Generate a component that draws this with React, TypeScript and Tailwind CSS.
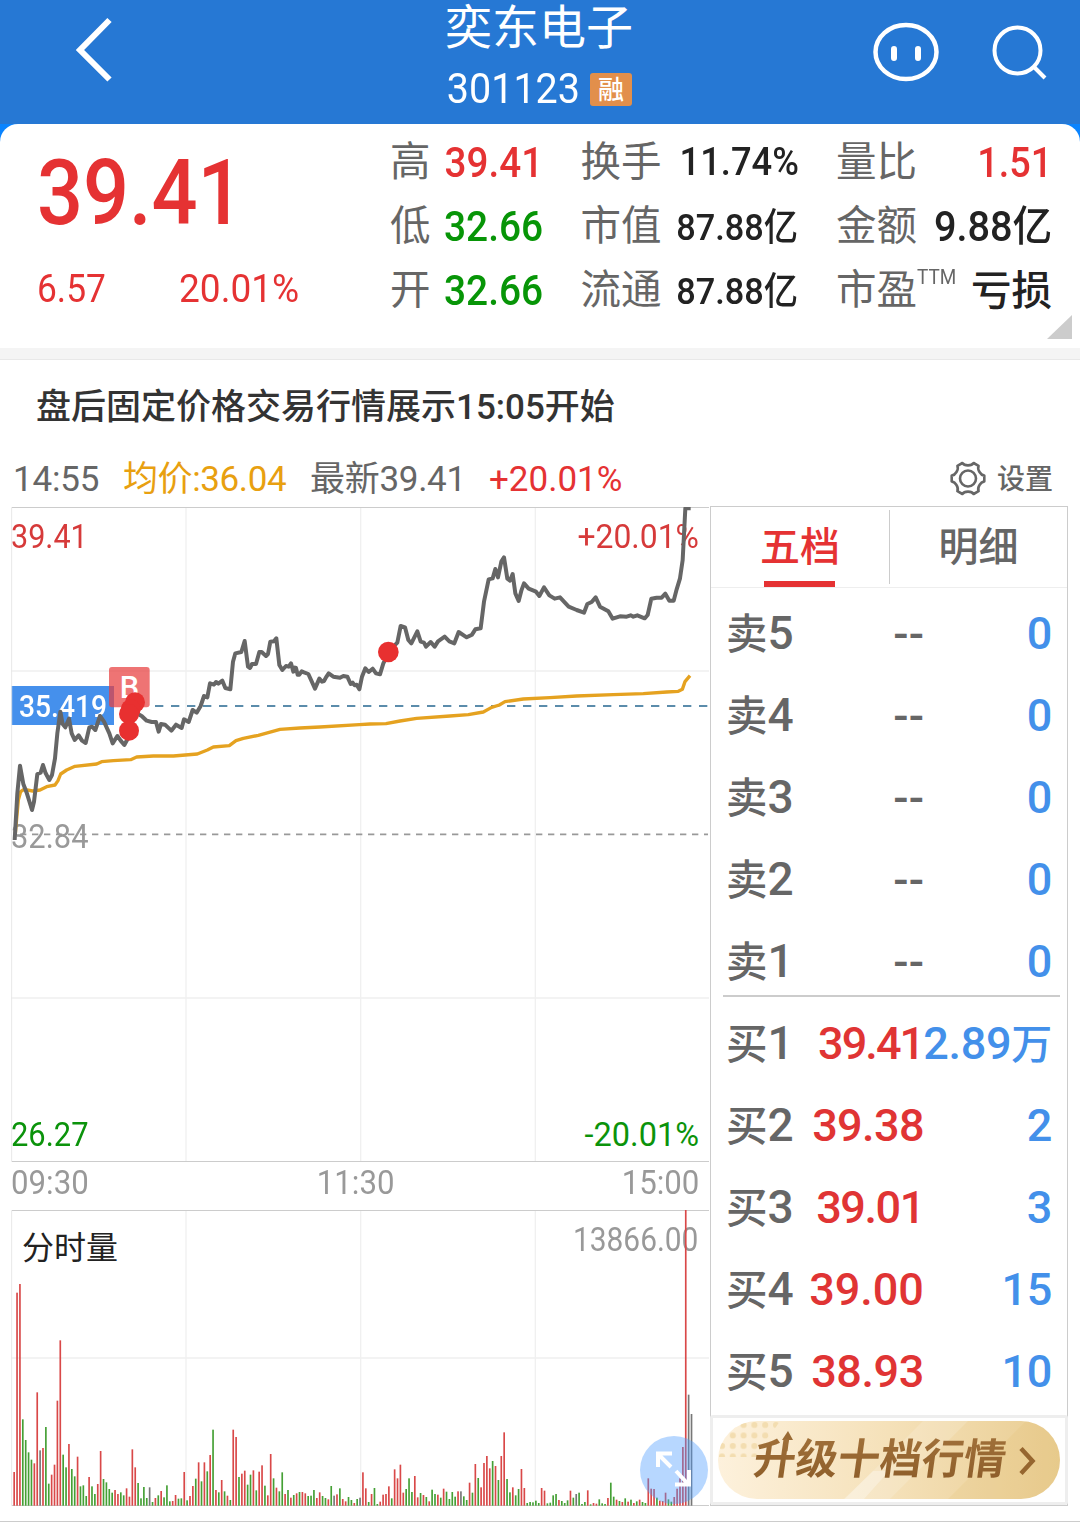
import { type ReactNode } from "react";
import clsx from "clsx";

type Stat = {
  label: string;
  sup?: string;
  value: string;
  className: string;
};

type Level = { label: string; price: string; volume: string; tight?: string };

const stats: Stat[][] = [
  [
    { label: "高", value: "39.41", className: "scale-x-[0.92] text-[42px] text-[#e53233]" },
    { label: "换手", value: "11.74%", className: "scale-x-[0.955] text-[38px] text-[#222]" },
    { label: "量比", value: "1.51", className: "scale-x-[0.9] text-[42px] text-[#e53233]" },
  ],
  [
    { label: "低", value: "32.66", className: "scale-x-[0.925] text-[42px] text-[#079507]" },
    { label: "市值", value: "87.88亿", className: "scale-x-[0.915] pt-[2px] text-[37.5px] text-[#222]" },
    { label: "金额", value: "9.88亿", className: "scale-x-[0.945] text-[42px] text-[#222]" },
  ],
  [
    { label: "开", value: "32.66", className: "scale-x-[0.925] text-[42px] text-[#079507]" },
    { label: "流通", value: "87.88亿", className: "scale-x-[0.915] pt-[2px] text-[37.5px] text-[#222]" },
    { label: "市盈", sup: "TTM", value: "亏损", className: "mt-[3px] text-[40.5px] text-[#222]" },
  ],
];

const asks: Level[] = [
  { label: "卖5", price: "--", volume: "0" },
  { label: "卖4", price: "--", volume: "0" },
  { label: "卖3", price: "--", volume: "0" },
  { label: "卖2", price: "--", volume: "0" },
  { label: "卖1", price: "--", volume: "0" },
];

const bids: Level[] = [
  { label: "买1", price: "39.41", volume: "2.89万", tight: "tracking-[-1.9px]" },
  { label: "买2", price: "39.38", volume: "2", tight: "tracking-[-0.6px]" },
  { label: "买3", price: "39.01", volume: "3", tight: "tracking-[-1.4px]" },
  { label: "买4", price: "39.00", volume: "15", tight: "tracking-[0px]" },
  { label: "买5", price: "38.93", volume: "10", tight: "tracking-[-0.4px]" },
];

// Chart data is kept at three units per css pixel.
const PRICE_LINE =
  "44,1020 52,880 60,797 70,852 80,878 96,930 102,905 112,822 122,818 129,795 137,820 148,840 156,825 165,775 172,700 181,635 188,672 196,682 207,656 215,700 224,720 236,706 246,722 257,729 268,682 276,680 286,690 300,648 312,665 328,700 338,730 352,708 362,722 373,735 384,715 395,670 410,640 425,648 440,662 455,666 468,666 476,695 483,672 495,674 514,692 528,674 545,684 552,658 566,666 578,630 590,638 602,618 612,588 622,592 630,550 642,554 648,546 655,551 667,542 676,564 691,568 699,485 706,460 724,456 734,423 744,500 750,504 756,492 768,492 778,456 785,456 798,468 804,462 811,425 822,424 829,415 838,495 847,510 858,498 866,500 873,490 880,515 885,503 888,504 893,524 898,524 905,514 912,517 925,522 945,566 958,536 966,545 972,543 978,532 986,520 1000,530 1020,533 1030,528 1042,530 1052,552 1058,548 1064,556 1070,554 1078,568 1086,530 1096,505 1106,516 1118,506 1128,520 1140,523 1150,490 1165,460 1180,440 1192,428 1202,378 1215,382 1225,420 1234,430 1252,394 1262,425 1272,428 1278,440 1292,426 1304,440 1314,424 1334,410 1348,424 1363,430 1376,396 1400,412 1416,404 1426,388 1442,385 1452,305 1466,238 1478,235 1486,207 1494,232 1504,185 1512,172 1522,236 1530,242 1538,222 1546,280 1556,303 1564,272 1572,250 1586,266 1608,275 1618,288 1632,262 1648,286 1664,296 1680,292 1706,320 1730,330 1752,338 1762,312 1775,306 1787,292 1800,320 1825,334 1838,356 1860,349 1880,350 1892,346 1900,350 1912,346 1934,355 1943,345 1954,296 1970,293 1985,293 1996,281 2008,302 2021,302 2030,268 2040,235 2048,180 2056,25 2072,25";

const AVG_LINE =
  "46,1000 55,900 62,875 72,868 98,873 120,870 140,860 165,855 174,842 182,822 200,810 225,799 290,792 305,785 340,782 392,779 410,771 460,768 520,768 592,762 622,750 640,741 688,737 708,722 730,715 775,706 840,688 900,684 960,681 1078,674 1110,672 1158,671 1200,663 1250,655 1350,648 1405,644 1450,636 1475,622 1498,615 1515,605 1570,597 1650,593 1730,588 1840,584 1930,581 2000,576 2035,574 2047,568 2055,545 2070,527";

// One entry a minute: height of the bar, then r(ise), g(reen fall) or k (flat).
const VOLUME =
  "101r 639r 665r 259g 197g 160g 138g 127r 340r 166k 173r 236g 66g 93r 123r 315r 496r 153g 115g 185r 110g 88g 147r 58g 61g 29g 86r 58g 35g 65r 164r 80g 70g 50g 39g 47r 35r 40g 31g 52r 27r 169r 115r 68g 22g 56g 23g 55k 11g 23r 31g 44r 25g 61g 13g 14r 32r 21g 22g 101r 16g 29r 59r 81g 130r 73g 130r 103g 152r 228g 47r 40g 77r 43g 30r 17g 228r 206r 86g 96r 105r 63g 93g 106r 46g 102r 121r 60g 31r 155r 82g 54r 43g 100g 35r 47g 24r 32g 37r 41g 41r 37r 29g 30g 47g 23r 40r 29g 23g 19r 59g 30k 34r 52g 20r 13r 26g 17g 8r 20g 24k 100r 52r 11g 35r 53g 5g 12r 33r 35r 58r 22g 109r 82r 123r 39r 50g 82g 41g 89r 25r 38g 32r 26g 13r 48g 35g 33r 24g 51r 42g 20g 41g 27g 43r 43k 28g 17g 69r 39g 125r 83g 55r 128r 149r 112r 134g 119r 77g 149r 220r 80g 40g 55r 31g 50g 110r 53r 8g 11g 10g 15g 8g 53r 45r 7g 9g 31g 35g 17r 14g 8g 16g 45r 24g 35k 39g 5g 11g 46r 4g 8r 6r 19g 7g 5g 23r 69g 27g 18r 14g 11r 22g 12r 18g 8r 13g 18r 11g 8g 82r 51r 50r 24g 15r 14r 39r 19g 12g 26r 51r 82r 176r 887r 333k 275k";

const bars = VOLUME.split(" ").map((entry, i) => ({
  x: 40 + i * 8.647,
  height: parseInt(entry, 10),
  kind: entry.slice(-1),
}));

const barFill: Record<string, string> = {
  r: "fill-[#d94848]",
  g: "fill-[#45a035]",
  k: "fill-[#777]",
};

function Header() {
  return (
    <header className="grid h-[124px] grid-cols-[1fr_192px_1fr] bg-[#2678d4] text-white">
      <button aria-label="返回" className="mt-[14px] ml-[72px] h-[72px] w-[44px]">
        <svg viewBox="0 0 44 72" fill="none" stroke="currentColor" strokeWidth="6">
          <path d="M37.5 6 8 36l29.5 29.5" />
        </svg>
      </button>
      <div className="flex flex-col">
        <h1 className="h-[62px] pl-[1px] text-[47px] leading-[55px] whitespace-nowrap">奕东电子</h1>
        <div className="flex h-[54px] items-center">
          <span className="w-[146px] origin-left scale-x-[0.94] pl-[3px] text-[42px] leading-[56px]">301123</span>
          <span className="h-[33px] w-[42px] rounded-[3px] bg-[#e28f4b] text-center text-[26px] leading-[34px] font-medium">
            融
          </span>
        </div>
      </div>
      <div className="mr-[28px] flex items-start justify-end gap-[48px] pt-[18px]">
        <svg className="h-[68px] w-[72px]" viewBox="0 0 72 68" fill="none" stroke="currentColor">
          <ellipse cx="36" cy="34" rx="30.5" ry="27" strokeWidth="4.5" />
          <path d="M24 31v9M48 31v9" strokeWidth="6" strokeLinecap="round" />
        </svg>
        <svg className="mt-[4px] h-[62px] w-[62px]" viewBox="0 0 62 62" fill="none" stroke="currentColor" strokeWidth="4">
          <circle cx="27.5" cy="28.5" r="23" />
          <path d="m44 45 11 11" />
        </svg>
      </div>
    </header>
  );
}

function Quote() {
  return (
    <section className="bg-[#0a84ff]">
      <div className="relative flex h-[224px] rounded-t-[18px] bg-white">
        <div className="w-[390px] pt-[21px] pl-[37px] text-[#e53233]">
          <div className="origin-left scale-x-[0.9] text-[90px] leading-[98px] font-medium">39.41</div>
          <div className="mt-[22px] flex text-[38px] leading-[48px]">
            <span className="w-[142px] origin-left scale-x-[0.93]">6.57</span>
            <span className="origin-left scale-x-[0.975]">20.01%</span>
          </div>
        </div>
        <div className="grid h-[192px] grid-cols-[153px_218px_216px] gap-x-[37.500px] pt-[6px]">
          {stats.flat().map((s) => (
            <div key={s.label} className="flex h-[64px] items-center justify-between whitespace-nowrap">
              <span className="flex text-[40.5px] leading-[69px] text-[#666]">
                {s.label}
                {s.sup && (
                  <sup className="top-0 w-0 origin-left scale-x-[0.9] text-[21px] leading-[42px]">{s.sup}</sup>
                )}
              </span>
              <span className={clsx("origin-right leading-[65px] font-medium", s.className)}>{s.value}</span>
            </div>
          ))}
        </div>
        <svg className="absolute right-[8px] bottom-[9px] h-[24px] w-[25px]" viewBox="0 0 25 24">
          <path d="M25 0v24H0z" className="fill-[#ccc]" />
        </svg>
      </div>
    </section>
  );
}

function InfoRow() {
  return (
    <div className="flex h-[53px] items-center justify-between pr-[27px] pl-[13px] text-[35px] whitespace-nowrap text-[#666]">
      <div className="flex items-center leading-[56px]">
        <span className="w-[110px] tracking-[-0.2px]">14:55</span>
        <span className="w-[187px] tracking-[-0.4px] text-[#e8a010]">均价:36.04</span>
        <span className="w-[179px] tracking-[-0.3px]">最新39.41</span>
        <span className="text-[#e53233]">+20.01%</span>
      </div>
      <button className="flex items-center gap-[11px] text-[28px] leading-[56px] font-medium">
        <svg className="-mt-[2px] h-[36px] w-[36px]" viewBox="0 0 36 36" fill="none" stroke="currentColor" strokeWidth="2.6">
          <path
            d="M12.4 2 Q13.800 4.400 18 4.400 Q22.200 4.400 23.600 2 L28.600 4.800 Q27.400 7.500 29.500 11 Q31.200 14 34.300 14.600 V20.400 Q31.200 21 29.500 24 Q27.400 27.500 28.600 30.200 L23.600 33 Q22.200 30.600 18 30.600 Q13.800 30.600 12.400 33 L7.400 30.200 Q8.600 27.500 6.500 24 Q4.800 21 1.700 20.400 V14.600 Q4.800 14 6.500 11 Q8.600 7.500 7.400 4.800 Z"
            strokeLinejoin="round"
          />
          <circle cx="18" cy="17.5" r="8" />
        </svg>
        设置
      </button>
    </div>
  );
}

function ChartLabel({ className, children }: { className: string; children: ReactNode }) {
  return <span className={clsx("absolute text-[32.5px] leading-[36px]", className)}>{children}</span>;
}

function PriceChart() {
  return (
    <div className="relative h-[655px]">
      <ChartLabel className="top-[12px] left-0 origin-left scale-x-[0.94] text-[#d63a3a]">39.41</ChartLabel>
      <ChartLabel className="top-[12px] right-[11px] origin-right scale-x-[0.98] text-[#d63a3a]">+20.01%</ChartLabel>
      <ChartLabel className="top-[312px] left-0 origin-left scale-x-[0.95] text-[#999]">32.84</ChartLabel>
      <ChartLabel className="top-[610px] left-0 origin-left scale-x-[0.95] text-[#0b930b]">26.27</ChartLabel>
      <ChartLabel className="top-[610px] right-[11px] text-[#0b930b]">-20.01%</ChartLabel>
      <div className="absolute top-[179px] left-0 h-[39px] w-[103px] bg-[#4590ec] pl-[8px] text-[31px] leading-[42px] font-medium text-white">
        <span className="block origin-left scale-x-[0.91]">35.419</span>
      </div>
      <svg className="relative h-[655px] w-[698px]" viewBox="33 21 2094 1965" fill="none">
        <path d="M558 24V1983M1082 24V1983M1606 24V1983M33 513H2127M33 1494H2127" className="stroke-[#f0f0f0]" strokeWidth="4" />
        <path d="M35 24V1983" className="stroke-[#e8e8e8]" strokeWidth="3" />
        <path d="M35 22.5H2127M35 1984.5H2127" className="stroke-[#ccc]" strokeWidth="3" />
        <path d="M465 618H2124" className="stroke-[#5b8cab]" strokeWidth="6" strokeDasharray="25 23" />
        <path d="M60 1003H2124" className="stroke-[#999]" strokeWidth="5" strokeDasharray="19 17" />
        <polyline points={AVG_LINE} className="stroke-[#e5a220]" strokeWidth="10" strokeLinejoin="round" />
        <polyline points={PRICE_LINE} className="stroke-[#666]" strokeWidth="12" strokeLinejoin="round" />
        <rect x="327" y="501" width="122" height="121" rx="9" fillOpacity="0.72" className="fill-[#e83e3e]" />
        <text x="388" y="594" fontSize="92" textAnchor="middle" className="fill-white font-medium">
          B
        </text>
        <g className="fill-[#e83030]">
          <circle cx="405" cy="607" r="30" />
          <circle cx="392" cy="628" r="30" />
          <circle cx="387" cy="642" r="30" />
          <circle cx="387" cy="692" r="30" />
          <circle cx="1165" cy="456" r="31" />
        </g>
      </svg>
    </div>
  );
}

function VolumeChart() {
  return (
    <div className="relative h-[296px]">
      <span className="absolute top-[20px] left-[11px] text-[32px] leading-[36px] text-[#222]">分时量</span>
      <ChartLabel className="top-[12px] right-[12px] origin-right scale-x-[0.92] text-[#999]">13866.00</ChartLabel>
      <svg className="relative h-[296px] w-[698px]" viewBox="33 270 2094 888">
        <path d="M558 273V1155M1082 273V1155M1606 273V1155M33 714H2127" className="stroke-[#f0f0f0]" strokeWidth="4" />
        <path d="M35 273V1155" className="stroke-[#e8e8e8]" strokeWidth="3" />
        <path d="M35 271.5H2127M35 1156.5H2127" className="stroke-[#ccc]" strokeWidth="3" />
        {bars.map((b, i) => (
          <rect key={i} x={b.x} y={1157 - b.height} width="5" height={b.height} className={barFill[b.kind]} />
        ))}
      </svg>
      <button aria-label="全屏" className="absolute right-[2px] bottom-[2px] h-[68px] w-[68px] rounded-full bg-[#4a9cff]/40 text-white">
        <svg viewBox="0 0 68 68" fill="none" stroke="currentColor" strokeWidth="4">
          <path d="M32 17.500H18v13.500M19 19l12 12M36 35l12 13M49 34v14.500H35" />
        </svg>
      </button>
    </div>
  );
}

function LevelRow({ level, bid }: { level: Level; bid?: boolean }) {
  return (
    <div className="flex h-[82px] items-center text-[45px] leading-[82px] font-medium whitespace-nowrap">
      <span className="w-[75px] text-[41.500px] text-[#666]">
        {level.label.slice(0, 1)}
        <span className="text-[46px]">{level.label.slice(1)}</span>
      </span>
      <span className={clsx("w-[126px] text-right", bid ? "text-[#e03434]" : "text-[#666]", level.tight)}>
        {level.price}
      </span>
      <span className="w-[130px] text-right tracking-[-0.3px] text-[#4390ea]">
        {bid && level.volume.endsWith("万") ? (
          <>
            {level.volume.slice(0, -1)}
            <span className="text-[41px]">万</span>
          </>
        ) : (
          level.volume
        )}
      </span>
    </div>
  );
}

function UpgradeButton() {
  return (
    <div className="-mx-px h-[90px] rounded-[3px] border-[3px] border-[#eee] bg-white pt-[3px] pl-[5px]">
      <button className="relative flex h-[78px] w-[342px] items-center overflow-hidden rounded-full bg-linear-to-r from-[#fdf1dc] via-[#f5e1b9] to-[#e9cd92] pl-[36px]">
        <svg className="absolute inset-0 h-[78px] w-[342px]" viewBox="0 0 342 78">
          <defs>
            <pattern id="dots" width="10.800" height="10.500" patternUnits="userSpaceOnUse">
              <circle cx="4" cy="4" r="3" className="fill-[#f3ddb0]" />
            </pattern>
          </defs>
          <path d="M0 0h62L38 36H0z" fill="url(#dots)" />
          <path d="M205 0h45l-78 78h-45z" fill="white" fillOpacity="0.16" />
          <path d="m155 50 16 0-25 28h-20z" fill="white" fillOpacity="0.3" />
          <path d="M308 0h34v78H230z" fill="#dfb868" fillOpacity="0.16" />
          <path d="m64 19 6-9 5 9z" className="fill-[#9a6b35]" />
          <path d="M69.500 15 67.500 30" className="stroke-[#9a6b35]" strokeWidth="4" />
        </svg>
        <span className="relative -skew-x-8 bg-linear-to-b from-[#a87840] to-[#855522] bg-clip-text text-[42px] leading-[84px] font-bold whitespace-nowrap text-transparent">
          升级十档行情
        </span>
        <svg className="absolute top-[26px] left-[300px] h-[28px] w-[18px]" viewBox="0 0 18 28" fill="none">
          <path d="M3 1.500 14.500 14 3 26.500" className="stroke-[#96662f]" strokeWidth="4.500" />
        </svg>
      </button>
    </div>
  );
}

function OrderBook() {
  return (
    <aside className="flex h-[1000px] w-[358px] flex-col border border-[#ccc]">
      <div className="flex h-[81px] border-b border-[#eee] text-[40px] leading-[82px] font-medium">
        <button className="relative w-[178px] text-[#e53233]">
          五档
          <span className="absolute bottom-0 left-[53px] h-[6px] w-[71px] bg-[#e53233]" />
        </button>
        <span className="mt-[3px] h-[74px] w-px bg-[#ccc]" />
        <button className="flex-1 text-[#666]">明细</button>
      </div>
      <div className="mt-[5px] px-[15px]">
        {asks.map((l) => (
          <LevelRow key={l.label} level={l} />
        ))}
      </div>
      <div className="-mt-[8px] mr-[7px] ml-[12px] h-[2px] shrink-0 bg-[#ccc]" />
      <div className="mt-[6px] px-[15px]">
        {bids.map((l) => (
          <LevelRow key={l.label} level={l} bid />
        ))}
      </div>
      <div className="mt-auto">
        <UpgradeButton />
      </div>
    </aside>
  );
}

export default function App() {
  return (
    <main className="h-[1527px] w-[1080px] overflow-hidden bg-white font-[Roboto,'Noto_Sans_CJK_SC',sans-serif]">
      <Header />
      <Quote />
      <div className="h-[12px] border-b border-[#e8e8e8] bg-[#f4f4f4]" />
      <p className="h-[93px] pl-[36px] text-[35px] leading-[95px] font-medium whitespace-nowrap text-[#333]">
        盘后固定价格交易行情展示15:05开始
      </p>
      <InfoRow />
      <div className="flex h-[1000px]">
        <div className="ml-[11px] w-[699px] pt-px">
          <PriceChart />
          <div className="grid h-[48px] grid-cols-3 pr-[11px] text-[32.500px] leading-[42px] text-[#999]">
            <span className="origin-left scale-x-[0.96]">09:30</span>
            <span className="scale-x-[0.96] pl-[2px] text-center">11:30</span>
            <span className="origin-right scale-x-[0.96] text-right">15:00</span>
          </div>
          <VolumeChart />
        </div>
        <OrderBook />
      </div>
      <div className="mt-[15px] h-px bg-[#ccc]" />
    </main>
  );
}
